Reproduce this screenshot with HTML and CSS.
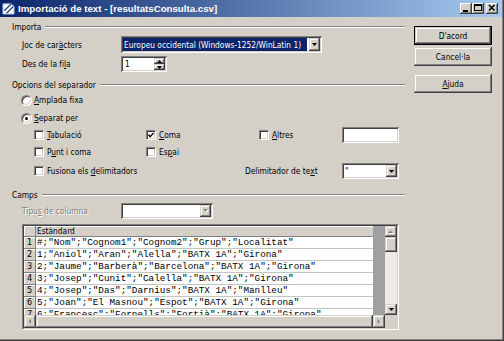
FILE: index.html
```html
<!DOCTYPE html>
<html lang="ca">
<head>
<meta charset="utf-8">
<title>Importació de text</title>
<link rel="stylesheet" href="styles.css">
</head>
<body>
<div class="win">
  <div class="frame">
    <div class="title">
      <svg class="ticon" width="14" height="14" viewBox="0 0 14 14">
        <path d="M1 2 H10 L13 5 V13 H1 Z" fill="#fff" stroke="#9fb4d8" stroke-width="1"/>
        <path d="M2 9 L9 2 L11 2 L3 10 Z" fill="#1c3f8c"/>
        <path d="M4 12 L12 4 L12 6 L6 12 Z" fill="#1c3f8c"/>
      </svg>
      <span class="ttext">Importació de text - [resultatsConsulta.csv]</span>
      <div class="tbtns">
        <span class="tb"><svg width="12" height="11" viewBox="0 0 12 11"><rect x="3" y="7" width="5" height="2" fill="#000"/></svg></span>
        <span class="tb"><svg width="12" height="11" viewBox="0 0 12 11"><rect x="2.5" y="1.5" width="7" height="6" fill="none" stroke="#000"/><rect x="2" y="1" width="8" height="2" fill="#000"/></svg></span>
        <span class="tb close"><svg width="12" height="11" viewBox="0 0 12 11"><path d="M3 2 L8.5 7.5 M8.5 2 L3 7.5" stroke="#000" stroke-width="1.5"/></svg></span>
      </div>
    </div>
    <div class="body">
      <div class="main">
        <div class="grp g1"><span>Importa</span><i class="line"></i></div>
        <div class="row r-joc">
          <span class="lbl">Joc de car<u>à</u>cters</span>
          <div class="combo sunk joc">
            <span class="cval sel">Europeu occidental (Windows-1252/WinLatin 1)</span>
            <span class="cbtn raised"><svg width="5" height="3" viewBox="0 0 5 3"><path d="M0 0 H5 L2.5 3 Z" fill="#000"/></svg></span>
          </div>
        </div>
        <div class="row r-fila">
          <span class="lbl">Des de la fi<u>l</u>a</span>
          <div class="spin sunk">
            <span class="cval">1</span>
            <span class="spinbtns">
              <span class="sb raised"><svg width="5" height="3" viewBox="0 0 5 3"><path d="M0 3 H5 L2.5 0 Z" fill="#000"/></svg></span>
              <span class="sb raised"><svg width="5" height="3" viewBox="0 0 5 3"><path d="M0 0 H5 L2.5 3 Z" fill="#000"/></svg></span>
            </span>
          </div>
        </div>
        <div class="grp g2"><span>Opcions del separador</span><i class="line"></i></div>
        <div class="radio r1"><span class="rb"></span><span><u>A</u>mplada fixa</span></div>
        <div class="radio r2"><span class="rb on"></span><span><u>S</u>eparat per</span></div>
        <div class="chk c1">
          <span class="opt"><span class="cb"></span><span><u>T</u>abulació</span></span>
          <span class="opt"><span class="cb"><svg width="6" height="6" viewBox="0 0 7 7"><path d="M0.5 3 L2.5 5.5 L6.5 1" fill="none" stroke="#000" stroke-width="1.6"/></svg></span><span><u>C</u>oma</span></span>
          <span class="opt"><span class="cb"></span><span><u>A</u>ltres</span></span>
          <span class="field sunk"></span>
        </div>
        <div class="chk c2">
          <span class="opt"><span class="cb"></span><span>P<u>u</u>nt i coma</span></span>
          <span class="opt"><span class="cb"></span><span>Es<u>p</u>ai</span></span>
        </div>
        <div class="chk c3">
          <span class="opt"><span class="cb"></span><span>Fusiona els <u>d</u>elimitadors</span></span>
          <span class="opt">Delimitador de te<u>x</u>t</span>
          <div class="combo sunk delim">
            <span class="cval">"</span>
            <span class="cbtn raised"><svg width="5" height="3" viewBox="0 0 5 3"><path d="M0 0 H5 L2.5 3 Z" fill="#000"/></svg></span>
          </div>
        </div>
        <div class="grp g3"><span>Camps</span><i class="line"></i></div>
        <div class="row r-tipus">
          <span class="lbl dis">Tipu<u>s</u> de columna</span>
          <div class="combo sunk tipus">
            <span class="cval"></span>
            <span class="cbtn raised"><svg width="6" height="4" viewBox="0 0 6 4"><path d="M1 1 H6 L3.5 3.5 Z" fill="#fff"/><path d="M0 0 H5 L2.5 2.5 Z" fill="#808080"/></svg></span>
          </div>
        </div>
        <div class="tbl">
          <div class="tin">
            <div class="tview">
              <div class="grid">
                <div class="hr"><span class="rn"></span><span class="hc">Estàndard</span></div>
                <div class="r"><span class="rn">1</span><span class="c">#;"Nom";"Cognom1";"Cognom2";"Grup";"Localitat"</span></div>
                <div class="r"><span class="rn">2</span><span class="c">1;"Aniol";"Aran";"Alella";"BATX 1A";"Girona"</span></div>
                <div class="r"><span class="rn">3</span><span class="c">2;"Jaume";"Barberà";"Barcelona";"BATX 1A";"Girona"</span></div>
                <div class="r"><span class="rn">4</span><span class="c">3;"Josep";"Cunit";"Calella";"BATX 1A";"Girona"</span></div>
                <div class="r"><span class="rn">5</span><span class="c">4;"Josep";"Das";"Darnius";"BATX 1A";"Manlleu"</span></div>
                <div class="r"><span class="rn">6</span><span class="c">5;"Joan";"El Masnou";"Espot";"BATX 1A";"Girona"</span></div>
                <div class="r"><span class="rn">7</span><span class="c">6;"Francesc";"Fornells";"Fortià";"BATX 1A";"Girona"</span></div>
              </div>
              <div class="gcol"></div>
              <div class="vsb">
                <span class="sbtn raised"><svg width="6" height="4" viewBox="0 0 6 4"><path d="M1 4 H6 L3.5 1.5 Z" fill="#fff"/><path d="M0 3 H5 L2.5 0.5 Z" fill="#808080"/></svg></span>
                <span class="thumb raised"></span>
                <span class="track"></span>
                <span class="sbtn raised"><svg width="5" height="3" viewBox="0 0 5 3"><path d="M0 0 H5 L2.5 3 Z" fill="#000"/></svg></span>
              </div>
            </div>
            <div class="hsb">
              <span class="hbtn raised"><svg width="4" height="6" viewBox="0 0 4 6"><path d="M3 0 V5 L0.5 2.5 Z" fill="#808080"/></svg></span>
              <span class="hthumb raised"></span>
              <span class="hbtn raised"><svg width="4" height="6" viewBox="0 0 4 6"><path d="M0.5 0 V5 L3 2.5 Z" fill="#808080"/></svg></span>
              <span class="corner"></span>
            </div>
          </div>
        </div>
      </div>
      <div class="side">
        <span class="btn def"><span class="bin raised">D'acord</span></span>
        <span class="btn c2b"><span class="bin raised">Cancel·la</span></span>
        <span class="btn c3b"><span class="bin raised"><u>A</u>juda</span></span>
      </div>
    </div>
  </div>
</div>
</body>
</html>
```

FILE: styles.css
```css
* { box-sizing: border-box; }
html, body { margin: 0; padding: 0; }
body {
  width: 504px;
  height: 341px;
  overflow: hidden;
  background: #D4D0C8;
  font-family: "DejaVu Sans Condensed", "Liberation Sans", sans-serif;
  font-size: 8.3px;
  color: #000;
}
u { text-decoration: underline; text-underline-offset: 1px; }

.win {
  width: 504px;
  height: 341px;
  border-right: 1px solid #404040;
  border-bottom: 1px solid #404040;
  display: flex;
  flex-direction: column;
}
.frame {
  flex: 1;
  border-right: 1px solid #808080;
  border-bottom: 1px solid #808080;
  display: flex;
  flex-direction: column;
}

/* title bar */
.title {
  height: 17px;
  flex: none;
  background: linear-gradient(to right, #0A246A, #A6CAF0);
  display: flex;
  align-items: center;
  padding-left: 2px;
  color: #fff;
}
.ticon { width: 13px; height: 13px; margin-right: 3px; flex: none; }
.ttext {
  flex: 1;
  font-family: "Liberation Sans", sans-serif;
  font-weight: bold;
  font-size: 9.7px;
  white-space: nowrap;
}
.tbtns { display: flex; margin-right: 4px; }
.tb {
  width: 12px;
  height: 11px;
  background: #D4D0C8;
  box-shadow: inset -1px -1px #404040, inset 1px 1px #fff, inset -2px -2px #808080;
  display: block;
}
.tb svg { display: block; }
.tb.close { margin-left: 2px; }

/* bevels */
.sunk {
  background: #fff;
  box-shadow: inset 1px 1px #808080, inset -1px -1px #fff, inset 2px 2px #404040, inset -2px -2px #D4D0C8;
  padding: 2px;
}
.raised {
  background: #D4D0C8;
  box-shadow: inset -1px -1px #404040, inset 1px 1px #D4D0C8, inset -2px -2px #808080, inset 2px 2px #fff;
  display: flex;
  align-items: center;
  justify-content: center;
}
.raised svg { display: block; }

.body { flex: 1; display: flex; }
.main {
  width: 405px;
  padding-left: 12px;
  display: flex;
  flex-direction: column;
}
.side {
  width: 78px;
  margin-left: 9px;
  padding-top: 9px;
  display: flex;
  flex-direction: column;
}

/* group headers */
.grp { height: 16px; display: flex; align-items: center; white-space: nowrap; }
.grp .line {
  flex: 1;
  height: 2px;
  border-top: 1px solid #808080;
  border-bottom: 1px solid #fff;
  margin-left: 4px;
}
.g1 { margin-top: 2px; }
.g2 { margin-top: 5px; }
.g3 { margin-top: 8px; }

.row { display: flex; align-items: center; }
.lbl { width: 99px; margin-left: 10px; white-space: nowrap; }
.lbl.dis { color: #808080; text-shadow: 1px 1px 0 #fff; }
.r-joc { height: 17px; margin-top: 1px; }
.r-fila { height: 16px; margin-top: 3px; }
.r-tipus { height: 16px; }

.combo { display: flex; height: 100%; }
.combo .cval { flex: 1; display: flex; align-items: center; padding-left: 1px; white-space: nowrap; overflow: hidden; }
.combo .cbtn { width: 11px; flex: none; }
.joc { width: 201px; }
.joc .cval.sel { background: #0A246A; color: #fff; margin-right: 2px; padding-left: 1px; }
.delim { width: 57px; height: 16px; }
.tipus { width: 92px; }

.spin { width: 46px; height: 16px; display: flex; }
.spin .cval { flex: 1; display: flex; align-items: center; padding-left: 2px; }
.spinbtns { width: 11px; display: flex; flex-direction: column; }
.spinbtns .sb { flex: 1; }

/* radios */
.radio { display: flex; align-items: center; height: 12px; margin-left: 9px; }
.r1 { margin-top: 1px; }
.r2 { margin-top: 6px; }
.rb {
  width: 11px;
  height: 11px;
  border-radius: 50%;
  background: #fff;
  border: 1px solid;
  border-color: #808080 #fff #fff #808080;
  box-shadow: inset 1px 1px #404040, inset -1px -1px #D4D0C8;
  margin-right: 2px;
  display: flex;
  align-items: center;
  justify-content: center;
  flex: none;
}
.rb.on::after {
  content: "";
  width: 3px;
  height: 3px;
  border-radius: 50%;
  background: #000;
}

/* checkbox rows */
.chk { display: grid; align-items: center; padding-left: 22px; }
.c1 { grid-template-columns: 112px 113px 83px 57px; height: 16px; margin-top: 3px; }
.c2 { grid-template-columns: 112px 113px; height: 12px; margin-top: 3px; }
.c3 { grid-template-columns: 211px 97px 57px; height: 16px; margin-top: 5px; }
.opt { display: flex; align-items: center; white-space: nowrap; }
.cb {
  width: 10px;
  height: 10px;
  background: #fff;
  border: 1px solid;
  border-color: #808080 #fff #fff #808080;
  box-shadow: inset 1px 1px #404040, inset -1px -1px #D4D0C8;
  margin-right: 3px;
  flex: none;
  display: flex;
  align-items: center;
  justify-content: center;
}
.cb svg { display: block; }
.field { width: 57px; height: 16px; display: block; }

/* table */
.tbl {
  margin-left: 10px;
  margin-top: 5px;
  width: 377px;
  height: 106px;
  border: 1px solid;
  border-color: #808080 #fff #fff #808080;
}
.tin {
  height: 100%;
  border: 1px solid;
  border-color: #404040 #D4D0C8 #D4D0C8 #404040;
  display: flex;
  flex-direction: column;
}
.tview { height: 89px; display: flex; }
.grid { width: 349px; overflow: hidden; }
.hr { height: 11px; display: flex; }
.r { height: 12px; display: flex; }
.rn {
  width: 12px;
  flex: none;
  background: #D4D0C8;
  border-right: 1px solid #808080;
  border-bottom: 1px solid #808080;
  box-shadow: inset 1px 1px #fff;
  font-size: 9px;
  text-align: center;
  line-height: 11px;
}
.hc {
  flex: 1;
  background: #D4D0C8;
  border-bottom: 1px solid #808080;
  box-shadow: inset 0 1px #fff;
  padding-left: 1px;
  line-height: 10px;
}
.c {
  flex: 1;
  background: #fff;
  border-bottom: 1px solid #c4c4c4;
  font-family: "Liberation Mono", monospace;
  font-size: 9.3px;
  line-height: 11px;
  white-space: pre;
  overflow: hidden;
  padding-left: 1px;
}
.gcol { width: 12px; background: #A0A0A0; }
.vsb { width: 12px; display: flex; flex-direction: column; }
.sbtn { height: 11px; flex: none; }
.thumb { height: 15px; flex: none; }
.track { flex: 1; background: #ECEAE6; }
.hsb { height: 13px; display: flex; }
.hbtn { width: 12px; flex: none; }
.hthumb { flex: 1; }
.corner { width: 12px; background: #D4D0C8; }

/* side buttons */
.btn { height: 19px; display: flex; }
.btn .bin { flex: 1; white-space: nowrap; }
.btn.def { border: 1px solid #000; }
.c2b { margin-top: 2px; }
.c3b { margin-top: 8px; }
```
